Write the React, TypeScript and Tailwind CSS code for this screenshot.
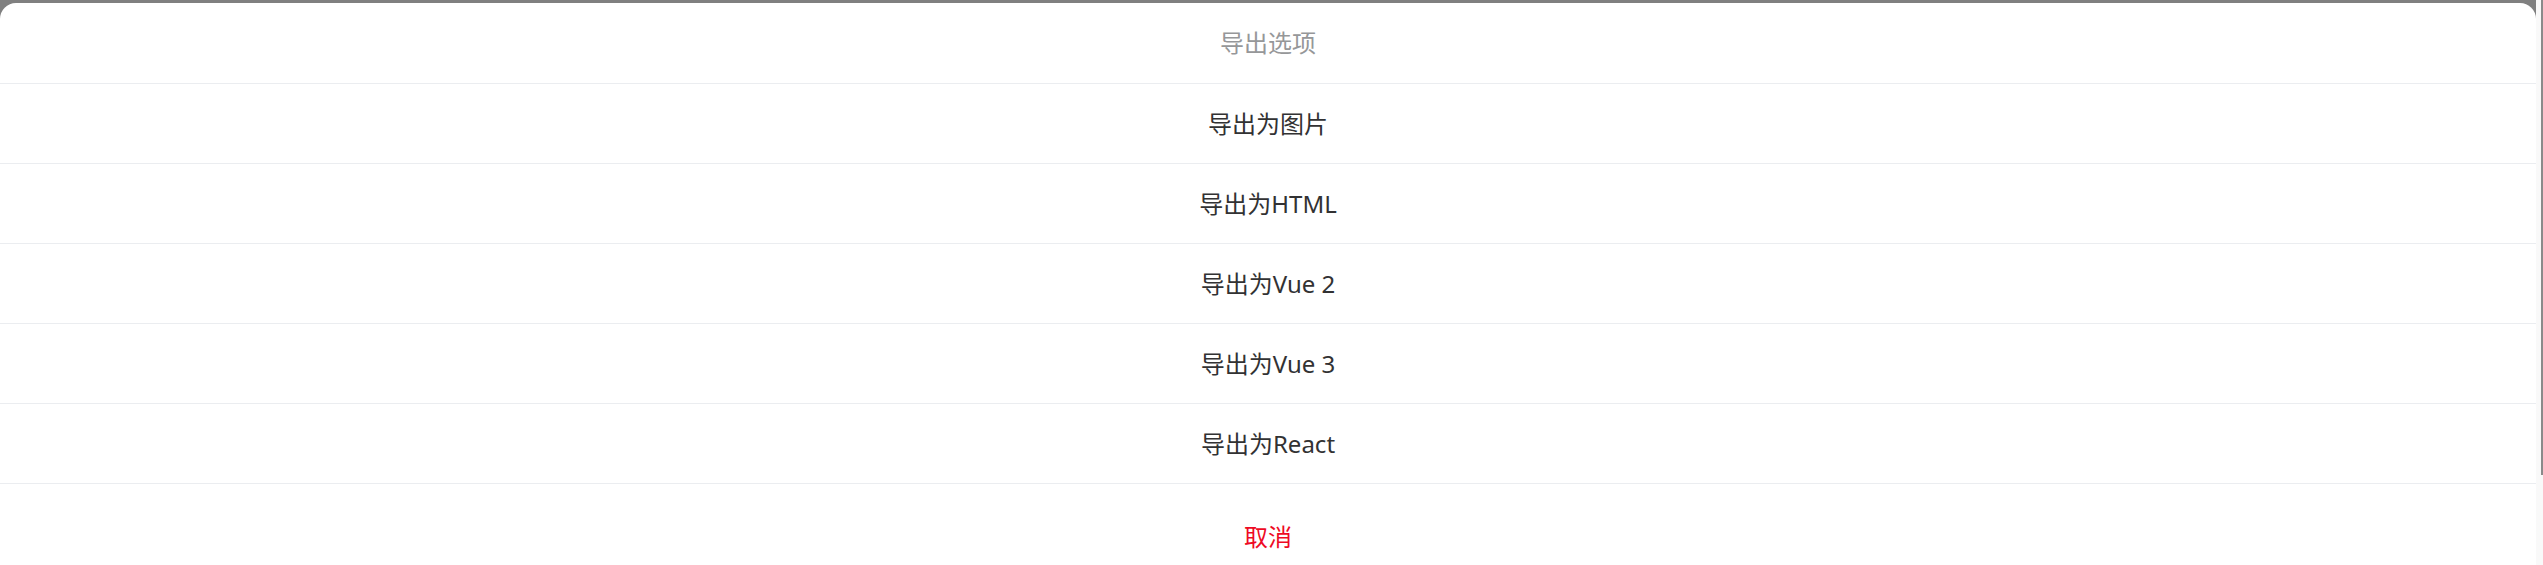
import React from 'react';

const actions = ['导出为图片', '导出为HTML', '导出为Vue 2', '导出为Vue 3', '导出为React'];

export default function App() {
  return (
    <div
      className="flex h-[565px] w-full overflow-hidden bg-[#808080]"
      style={{ fontFamily: '"Noto Sans", "Noto Sans CJK SC", sans-serif' }}
    >
      {/* Action sheet */}
      <div className="mt-[3px] flex flex-1 flex-col rounded-t-[16px] bg-white">
        <div className="flex h-[81px] shrink-0 items-center justify-center border-b border-[#ebedf0] text-[24px] text-[#969799]">
          导出选项
        </div>
        {actions.map((label) => (
          <button
            key={label}
            className="flex h-[80px] shrink-0 items-center justify-center border-b border-[#ebedf0] text-[24px] text-[#323233]"
          >
            {label}
          </button>
        ))}
        <div className="flex h-[80px] shrink-0 items-center justify-center pt-[26px] text-[24px] text-[#ee0a24]">
          取消
        </div>
      </div>

      {/* Scrollbar */}
      <div className="relative w-[7px] bg-[#f9f9f9]">
        <div className="absolute right-0 top-0 h-[475px] w-[2px] bg-[#8a8a8a]" />
      </div>
    </div>
  );
}
